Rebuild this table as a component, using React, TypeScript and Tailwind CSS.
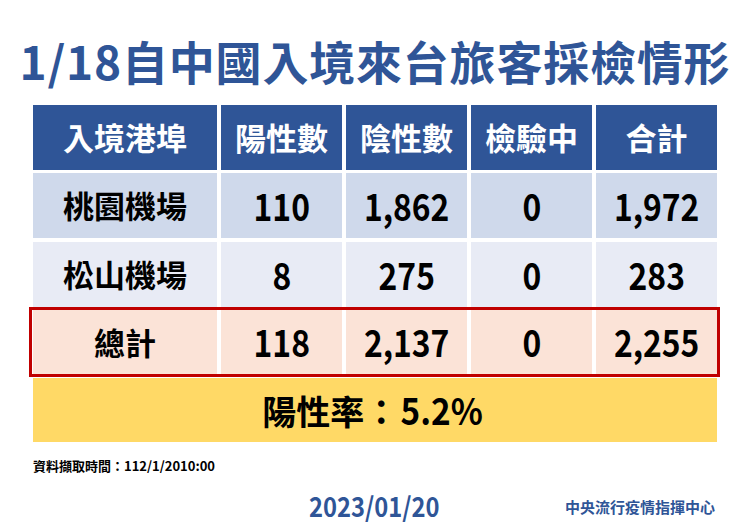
import React from "react";

const rows = [
  { name: "桃園機場", pos: "110", neg: "1,862", pend: "0", total: "1,972", bg: "bg-[#cfd9eb]" },
  { name: "松山機場", pos: "8", neg: "275", pend: "0", total: "283", bg: "bg-[#e8ebf5]" },
];

const headers = ["入境港埠", "陽性數", "陰性數", "檢驗中", "合計"];

function Row({ cells, bg, h, mt }: { cells: string[]; bg: string; h: string; mt: string }) {
  return (
    <div className={`grid grid-cols-[184px_121px_121px_121px_121px] gap-x-[4px] ${h} ${mt}`}>
      {cells.map((c, i) => (
        <div key={i} className={`${bg} flex items-center justify-center text-black`}>
          {i === 0 ? (
            <span className="text-[31px]">{c}</span>
          ) : (
            <span className="inline-block text-[37px] scale-x-[0.86]">{c}</span>
          )}
        </div>
      ))}
    </div>
  );
}

export default function App() {
  return (
    <div
      className="w-[750px] h-[531px] bg-white overflow-hidden font-bold"
      style={{ fontFamily: '"Noto Sans CJK TC", "Noto Sans", sans-serif' }}
    >
      <div className="pt-[37px] h-[84px] text-[46px] leading-[47px] text-[#2f5597] text-center tracking-[0.8px]">
        1/18自中國入境來台旅客採檢情形
      </div>

      <div className="ml-[33px] w-[684px] mt-[21px]">
        <div className="grid grid-cols-[184px_121px_121px_121px_121px] gap-x-[4px] h-[65px]">
          {headers.map((hd) => (
            <div key={hd} className="bg-[#2f5597] text-white text-[31px] flex items-center justify-center">
              {hd}
            </div>
          ))}
        </div>

        <Row cells={[rows[0].name, rows[0].pos, rows[0].neg, rows[0].pend, rows[0].total]} bg={rows[0].bg} h="h-[65px]" mt="mt-[3px]" />
        <Row cells={[rows[1].name, rows[1].pos, rows[1].neg, rows[1].pend, rows[1].total]} bg={rows[1].bg} h="h-[65px]" mt="mt-[4px]" />

        <div className="relative mt-[3px]">
          <Row cells={["總計", "118", "2,137", "0", "2,255"]} bg="bg-[#fbe3d7]" h="h-[64px]" mt="mt-0" />
          <div className="absolute -left-[4px] -right-[3px] -top-[3px] -bottom-[3px] border-[3px] border-[#c00000] pointer-events-none" />
        </div>

        <div className="mt-[4px] h-[64px] bg-[#ffd966] flex items-center justify-center text-black text-[34px]">
          <span>陽性率：</span>
          <span className="inline-block text-[37px] scale-x-[0.9] -ml-[2px]">5.2%</span>
        </div>
      </div>

      <div className="ml-[33px] mt-[15px] text-[13px] leading-[18px] text-black">
        資料擷取時間：112/1/2010:00
      </div>

      <div className="mx-[33px] mr-[35px] mt-[16px] grid grid-cols-[1fr_auto_1fr] items-center">
        <div />
        <div className="text-[27px] leading-[30px] text-[#2f5597] scale-x-[0.88]">2023/01/20</div>
        <div className="justify-self-end text-[15px] leading-[20px] text-[#2f5597] pt-[2px]">中央流行疫情指揮中心</div>
      </div>
    </div>
  );
}
